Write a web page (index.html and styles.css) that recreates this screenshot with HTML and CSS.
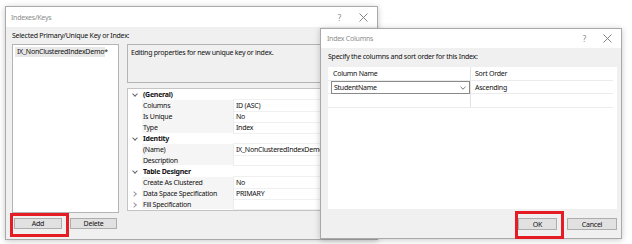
FILE: index.html
```html
<!DOCTYPE html>
<html lang="en">
<head>
  <meta charset="UTF-8">
  <title>Indexes/Keys</title>
  <link rel="stylesheet" href="styles.css">
</head>
<body>
  <div class="window keys">
    <div class="titlebar">
      <span class="title">Indexes/Keys</span>
      <span class="ctl help">?</span>
      <svg class="ctl close" width="9" height="9" viewBox="0 0 9 9"><path d="M0.5 0.5L8.5 8.5M8.5 0.5L0.5 8.5" stroke="#777" stroke-width="0.9"/></svg>
    </div>
    <div class="body">
      <div class="caption">Selected Primary/Unique Key or Index:</div>
      <div class="main">
        <div class="list">
          <div class="item">IX_NonClusteredIndexDemo*</div>
        </div>
        <div class="side">
          <div class="desc">Editing properties for new unique key or index.</div>
          <div class="props">
            <div class="row cat"><span class="tog down"></span><span class="name">(General)</span><span class="val"></span></div>
            <div class="row"><span class="tog"></span><span class="name">Columns</span><span class="val">ID (ASC)</span></div>
            <div class="row"><span class="tog"></span><span class="name">Is Unique</span><span class="val">No</span></div>
            <div class="row"><span class="tog"></span><span class="name">Type</span><span class="val">Index</span></div>
            <div class="row cat"><span class="tog down"></span><span class="name">Identity</span><span class="val"></span></div>
            <div class="row"><span class="tog"></span><span class="name">(Name)</span><span class="val">IX_NonClusteredIndexDemo</span></div>
            <div class="row"><span class="tog"></span><span class="name">Description</span><span class="val"></span></div>
            <div class="row cat"><span class="tog down"></span><span class="name">Table Designer</span><span class="val"></span></div>
            <div class="row"><span class="tog"></span><span class="name">Create As Clustered</span><span class="val">No</span></div>
            <div class="row"><span class="tog right"></span><span class="name">Data Space Specification</span><span class="val">PRIMARY</span></div>
            <div class="row"><span class="tog right"></span><span class="name">Fill Specification</span><span class="val"></span></div>
          </div>
        </div>
      </div>
      <div class="actions">
        <button class="btn add">Add</button>
        <button class="btn del">Delete</button>
      </div>
    </div>
  </div>

  <div class="window cols">
    <div class="titlebar">
      <span class="title">Index Columns</span>
      <span class="ctl help">?</span>
      <svg class="ctl close" width="9" height="9" viewBox="0 0 9 9"><path d="M0.5 0.5L8.5 8.5M8.5 0.5L0.5 8.5" stroke="#777" stroke-width="0.9"/></svg>
    </div>
    <div class="body">
      <div class="caption">Specify the columns and sort order for this Index:</div>
      <div class="grid">
        <div class="grow head"><span>Column Name</span><span>Sort Order</span></div>
        <div class="grow">
          <span class="combo">StudentName
            <svg width="6" height="4" viewBox="0 0 6 4"><path d="M0.5 0.8L3 3.2L5.5 0.8" fill="none" stroke="#555" stroke-width="0.8"/></svg>
          </span>
          <span>Ascending</span>
        </div>
        <div class="grow"><span></span><span></span></div>
      </div>
      <div class="actions end">
        <button class="btn ok">OK</button>
        <button class="btn cancel">Cancel</button>
      </div>
    </div>
  </div>

  <!-- red callouts over the buttons -->
  <div class="callout add-mark"></div>
  <div class="callout ok-mark"></div>
</body>
</html>
```

FILE: styles.css
```css
body {
  margin: 0;
  width: 632px;
  height: 244px;
  background: #fff;
  font-family: "Noto Sans", "Liberation Sans", sans-serif;
  font-size: 7px;
  letter-spacing: -0.25px;
  color: #111;
  position: relative;
  overflow: hidden;
}

.window {
  position: absolute;
  box-sizing: border-box;
  border: 1px solid #a9a9a9;
  background: #f0f0f0;
  display: flex;
  flex-direction: column;
  box-shadow: 0 1px 6px rgba(0, 0, 0, 0.22);
}

.keys { left: 5px; top: 6px; width: 373px; height: 234px; }
.cols { left: 320px; top: 28px; width: 302px; height: 211px; }

.titlebar {
  height: 20px;
  background: #fff;
  display: flex;
  align-items: center;
  padding-left: 5px;
  color: #8c8c8c;
  flex-shrink: 0;
}

.cols .titlebar { height: 19px; padding-left: 6px; }

.title { flex: 1; }

.ctl { color: #888; font-size: 8px; }
.help { margin-right: 18px; }
.close { margin-right: 9px; }
.cols .help { margin-right: 17px; }

.body {
  flex: 1;
  display: flex;
  flex-direction: column;
  padding: 3px 0 0 6px;
}

.cols .body { padding: 3px 4px 0 7px; }

.caption {
  height: 12px;
  line-height: 12px;
}

.main {
  display: flex;
  gap: 8px;
  margin-top: 2px;
  height: 169px;
}

.list {
  width: 107px;
  box-sizing: border-box;
  border: 1px solid #b4b4b4;
  background: #fff;
  padding: 2px 0 0 2px;
}

.item {
  width: 88px;
  height: 10px;
  line-height: 10px;
  padding-left: 2px;
  background: #e8e8e8;
}

.side {
  flex: 1;
  display: flex;
  flex-direction: column;
}

.desc {
  height: 39px;
  box-sizing: border-box;
  border: 1px solid #b4b4b4;
  background: #f0f0f0;
  padding: 3px 0 0 3px;
}

.props {
  margin-top: 5px;
  height: 123px;
  box-sizing: border-box;
  border: 1px solid #c4c4c4;
  background: #fff;
}

.row {
  display: grid;
  grid-template-columns: 14px 91px 1fr;
  height: 11px;
  line-height: 11px;
}

.row .name {
  padding-left: 1px;
  background: #f5f5f5;
  border-bottom: 1px solid #fff;
  white-space: nowrap;
  overflow: hidden;
}

.row .val {
  padding-left: 2px;
  border-left: 1px solid #ececec;
  border-bottom: 1px solid #f0f0f0;
  white-space: nowrap;
}

.row.cat .name { background: #fff; font-weight: bold; }
.row.cat .val { border-left: none; }

.tog { position: relative; }

.tog.down::after,
.tog.right::after {
  content: "";
  position: absolute;
  left: 5px;
  top: 3px;
  width: 3px;
  height: 3px;
  border-right: 1px solid #666;
  border-bottom: 1px solid #666;
  transform: rotate(45deg);
}

.tog.right::after {
  left: 4px;
  top: 4px;
  border-color: #999;
  transform: rotate(-45deg);
}

.actions {
  display: flex;
  gap: 8px;
  margin: 5px 0 0 2px;
}

.actions.end {
  justify-content: flex-end;
  gap: 10px;
  margin: 9px 0 0 0;
}

.btn {
  font: inherit;
  letter-spacing: inherit;
  color: #111;
  height: 11px;
  padding: 0;
  box-sizing: border-box;
  border: 1px solid #adadad;
  background: #e1e1e1;
  line-height: 9px;
}

.add { width: 48px; }
.del { width: 47px; }
.ok { width: 39px; height: 12px; }
.cancel { width: 50px; height: 12px; }

.grid {
  margin-top: 4px;
  height: 142px;
  background: #fff;
  padding-right: 4px;
}

.grow {
  display: grid;
  grid-template-columns: 142px 1fr;
  height: 14px;
  line-height: 13px;
  border-bottom: 1px solid #ececec;
  box-sizing: border-box;
  background: #fff;
}

.grow span + span {
  border-left: 1px solid #e2e2e2;
  padding-left: 4px;
}

.grow.head span:first-child { padding-left: 5px; }

.grow:nth-child(2) { height: 13px; }

.combo {
  margin-left: 3px;
  box-sizing: border-box;
  border: 1px solid #8a8a8a;
  padding-left: 2px;
  height: 13px;
  line-height: 11px;
  display: flex;
  justify-content: space-between;
  align-items: center;
  padding-right: 3px;
}

.callout {
  position: absolute;
  box-sizing: border-box;
  border: 3px solid #e61c24;
}

.add-mark { left: 10px; top: 213px; width: 59px; height: 24px; }
.ok-mark { left: 515px; top: 211px; width: 49px; height: 28px; }
```
